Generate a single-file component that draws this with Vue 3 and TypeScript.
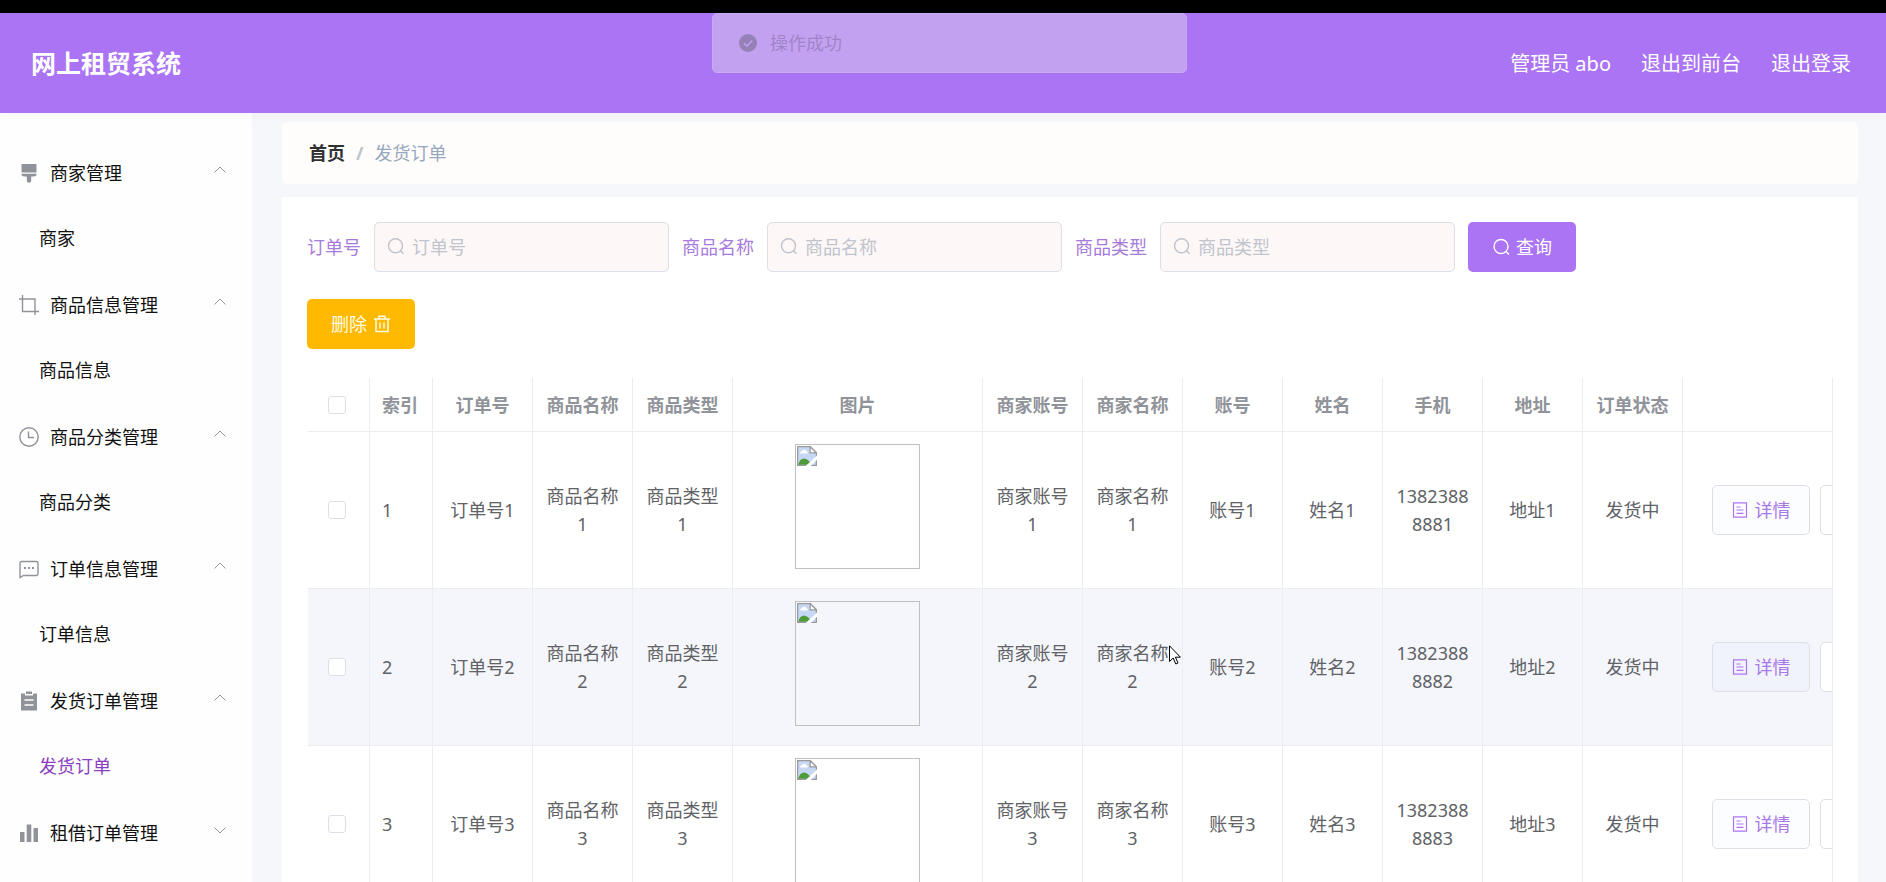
<script setup lang="ts">
interface Group {
  title: string
  icon: string
  child?: string
}

const groups: Group[] = [
  { title: '商家管理', icon: 'brush', child: '商家' },
  { title: '商品信息管理', icon: 'crop', child: '商品信息' },
  { title: '商品分类管理', icon: 'clock', child: '商品分类' },
  { title: '订单信息管理', icon: 'chat', child: '订单信息' },
  { title: '发货订单管理', icon: 'clipboard', child: '发货订单' },
  { title: '租借订单管理', icon: 'bars' },
]
const active = '发货订单'

const filters: string[] = ['订单号', '商品名称', '商品类型']

const columns: { label: string; cls: string }[] = [
  { label: '索引', cls: 'c-index' },
  { label: '订单号', cls: 'c-std' },
  { label: '商品名称', cls: 'c-std' },
  { label: '商品类型', cls: 'c-std' },
  { label: '图片', cls: 'c-pic' },
  { label: '商家账号', cls: 'c-std' },
  { label: '商家名称', cls: 'c-std' },
  { label: '账号', cls: 'c-std' },
  { label: '姓名', cls: 'c-std' },
  { label: '手机', cls: 'c-std' },
  { label: '地址', cls: 'c-std' },
  { label: '订单状态', cls: 'c-std' },
]

const rows = [1, 2, 3].map((n) => ({
  id: n,
  before: [`订单号${n}`, `商品名称${n}`, `商品类型${n}`],
  after: [`商家账号${n}`, `商家名称${n}`, `账号${n}`, `姓名${n}`, `1382388888${n}`, `地址${n}`, '发货中'],
}))
const hovered = 2
</script>

<template>
  <div class="page">
    <div class="strip"></div>
    <header class="header">
      <h1 class="brand">网上租贸系统</h1>
      <nav class="links">
        <span>管理员 abo</span>
        <a href="#front">退出到前台</a>
        <a href="#logout">退出登录</a>
      </nav>
      <div class="toast" role="status">
        <svg class="toast-icon" viewBox="0 0 18 18">
          <circle cx="9" cy="9" r="9" fill="#9580b8" />
          <path d="M5 9.200l2.900 2.900 5.300-5.600" fill="none" stroke="#c3a1f1" stroke-width="1.500" />
        </svg>
        <span>操作成功</span>
      </div>
    </header>

    <div class="body">
      <aside class="side">
        <section v-for="g in groups" :key="g.title">
          <button class="group" type="button">
            <svg class="g-icon" viewBox="0 0 20 20" fill="none" stroke="#909399" stroke-width="1.400">
              <g v-if="g.icon === 'brush'" fill="#909399" stroke="none">
                <path d="M2.500 1h15v8.500h-15zM2.500 10.800h15a2.600 2.600 0 0 1-2.600 2.600H12.200v4.200a2.200 2.200 0 0 1-4.400 0v-4.200H5.100a2.600 2.600 0 0 1-2.600-2.600z" />
              </g>
              <path v-else-if="g.icon === 'crop'" d="M0 4h16v16M3.500 0v16.500h16.500" />
              <g v-else-if="g.icon === 'clock'">
                <circle cx="10" cy="10" r="9.200" />
                <path d="M9.500 4.500v6h5.500" />
              </g>
              <g v-else-if="g.icon === 'chat'">
                <path d="M1 18.500V4.200A1.700 1.700 0 0 1 2.700 2.500h14.600A1.700 1.700 0 0 1 19 4.200v10.600a1.700 1.700 0 0 1-1.700 1.700H4.500z" />
                <path d="M5 9h2M9 9h2M13 9h2" stroke-width="2" />
              </g>
              <g v-else-if="g.icon === 'clipboard'">
                <path d="M2 2.500h4V4.500h8V2.500h4V19.500H2zM7 0.500h6v2.500H7z" fill="#909399" stroke="none" />
                <path d="M5.500 9h9M5.500 14h9" stroke="#fff" stroke-width="1.500" />
              </g>
              <path v-else d="M1 9h4.500v10H1zM7.700 1.500h4.600V19H7.700zM14.500 5H19v14h-4.500z" fill="#909399" stroke="none" />
            </svg>
            <span>{{ g.title }}</span>
            <svg class="arrow" viewBox="0 0 12 12" fill="none" stroke="#909399">
              <path :d="g.child ? 'M0.500 8.500L6 3l5.500 5.500' : 'M0.500 3.500L6 9l5.500-5.500'" />
            </svg>
          </button>
          <a v-if="g.child" href="#list" class="child" :class="{ on: g.child === active }">{{ g.child }}</a>
        </section>
      </aside>

      <main class="main">
        <nav class="crumbs">
          <a href="#home">首页</a><span class="slash">/</span><span>发货订单</span>
        </nav>

        <div class="card">
          <form class="filters" @submit.prevent>
            <template v-for="(f, i) in filters" :key="f">
              <label :for="`f${i}`">{{ f }}</label>
              <div class="field">
                <svg viewBox="0 0 18 18" fill="none" stroke="#c0c4cc" stroke-width="1.400">
                  <circle cx="8.500" cy="7.700" r="7" />
                  <path d="M13.300 12.500L16.500 15.800" />
                </svg>
                <input :id="`f${i}`" type="text" :placeholder="f" />
              </div>
            </template>
            <button class="btn query" type="submit">
              <svg viewBox="0 0 18 18" fill="none" stroke="#fff" stroke-width="1.400">
                <circle cx="9" cy="8.500" r="7" />
                <path d="M13.800 13.300L17 16.600" />
              </svg>
              <span>查询</span>
            </button>
          </form>

          <button class="btn remove" type="button">
            <span>删除</span>
            <svg viewBox="0 0 18 18" fill="none" stroke="#fffbe6" stroke-width="1.500">
              <path d="M1 4h16M3 4v12.500h12V4M6 3.500V1.300h6v2.200M7 7.500v6M11 7.500v6" />
            </svg>
          </button>

          <div class="scroller">
            <table class="grid">
              <thead>
                <tr>
                  <th class="c-check"><input type="checkbox" aria-label="全选" /></th>
                  <th v-for="c in columns" :key="c.label" :class="c.cls">{{ c.label }}</th>
                  <th class="c-ops"></th>
                </tr>
              </thead>
              <tbody>
                <tr v-for="r in rows" :key="r.id" :class="{ hover: r.id === hovered }">
                  <td class="c-check"><input type="checkbox" :aria-label="`选择 ${r.id}`" /></td>
                  <td class="c-index">{{ r.id }}</td>
                  <td v-for="t in r.before" :key="t">{{ t }}</td>
                  <td>
                    <div class="pic">
                      <svg viewBox="0 0 16 16">
                        <path d="M1 0.500h9.500L15.500 5.500V15.500H0.500V0.500z" fill="#c6d8f5" stroke="#9a9a9a" />
                        <path d="M10.500 0.500v5h5z" fill="#fff" stroke="#9a9a9a" />
                        <path d="M2.500 6a1.600 1.600 0 0 1 1.500-1.800 2 2 0 0 1 3.600 0A1.300 1.300 0 0 1 8.500 6z" fill="#fff" />
                        <path d="M1 15c1.500-6.500 7-7 10.500 0z" fill="#4f9a3b" />
                        <path d="M7 16L16 7.500V11L11 16z" fill="#fff" />
                      </svg>
                    </div>
                  </td>
                  <td v-for="t in r.after" :key="t">{{ t }}</td>
                  <td class="c-ops">
                    <div class="ops">
                      <button class="op" type="button">
                        <svg viewBox="0 0 16 16" fill="none" stroke="#ab74f5" stroke-width="1.200">
                          <path d="M1.500 0.800h13v14.400h-13zM4.500 5h4M4.500 8h7M4.500 11.300h7" />
                        </svg>
                        <span>详情</span>
                      </button>
                      <button class="op plain" type="button" aria-label="删除"></button>
                    </div>
                  </td>
                </tr>
              </tbody>
            </table>
          </div>
        </div>
      </main>
    </div>

    <svg class="pointer" viewBox="0 0 12 20">
      <path d="M0.500 0.800V16.500L4.200 13l2.600 6 2.200-1-2.600-5.800h5z" fill="#fff" stroke="#000" />
    </svg>
  </div>
</template>

<style>
body {
  margin: 0;
  background: #f5f7fa;
}
</style>

<style scoped>
.page {
  position: relative;
  height: 100vh;
  overflow: hidden;
  display: flex;
  flex-direction: column;
  font: 18px/28px "Noto Sans", "Noto Sans CJK SC", sans-serif;
  color: #606266;
}
.page * {
  box-sizing: border-box;
}
button,
input {
  font: inherit;
}
a {
  color: inherit;
  text-decoration: none;
}
.strip {
  flex: none;
  height: 13px;
  background: #000;
}
.header {
  position: relative;
  z-index: 1;
  flex: none;
  height: 100px;
  padding: 0 35px 0 31px;
  display: flex;
  align-items: center;
  justify-content: space-between;
  background: #aa74f5;
  color: #fff;
  box-shadow: 0 2px 12px rgba(0, 0, 0, 0.03);
}
.brand {
  margin: 0;
  font-size: 25px;
  font-weight: 700;
}
.links {
  display: flex;
  gap: 30px;
  padding-top: 2px;
  font-size: 20px;
}
.toast {
  position: absolute;
  top: 0;
  left: 50%;
  margin-left: -231px;
  width: 475px;
  height: 60px;
  padding: 0 26px;
  display: flex;
  align-items: center;
  gap: 13px;
  border: 1px solid #c9aaf3;
  border-radius: 5px;
  background: #c3a1f1;
  color: #a084ca;
}
.toast-icon {
  width: 18px;
  height: 18px;
}
.body {
  flex: 1;
  min-height: 0;
  display: flex;
}
.side {
  flex: none;
  width: 252px;
  padding-top: 25px;
  overflow: hidden;
  background: #fefefe;
  color: #111;
}
.group {
  width: 100%;
  height: 70px;
  padding: 0 26px 0 19px;
  display: flex;
  align-items: center;
  border: 0;
  background: none;
  color: #111;
}
.g-icon {
  width: 20px;
  height: 20px;
  margin-right: 11px;
}
.arrow {
  width: 12px;
  height: 12px;
  margin: 0 0 6px auto;
}
.child {
  display: flex;
  align-items: center;
  height: 60px;
  margin-bottom: 2px;
  padding-left: 39px;
}
.child.on {
  color: #8a3fc0;
}
.main {
  flex: 1;
  min-width: 0;
  padding: 9px 28px 0 30px;
  display: flex;
  flex-direction: column;
}
.crumbs {
  flex: none;
  height: 62px;
  margin-bottom: 13px;
  padding-left: 27px;
  display: flex;
  align-items: center;
  border-radius: 5px;
  background: #fffdfb;
  color: #97a8be;
}
.crumbs a {
  color: #303133;
  font-weight: 700;
}
.slash {
  margin: 0 11px;
  color: #c0c4cc;
  font-weight: 700;
}
.card {
  flex: 1;
  min-height: 0;
  padding: 25px 25px 0;
  overflow: hidden;
  background: #fff;
}
.filters {
  display: flex;
  align-items: center;
  gap: 13px;
}
.filters label {
  flex: none;
  color: #a67bdc;
}
.field {
  width: 295px;
  height: 50px;
  padding: 0 12px;
  display: flex;
  align-items: center;
  gap: 7px;
  border: 1px solid #dcdfe6;
  border-radius: 5px;
  background: #fdf7f7;
}
.field svg,
.btn svg {
  flex: none;
  width: 18px;
  height: 18px;
}
.field input {
  flex: 1;
  min-width: 0;
  padding: 0;
  border: 0;
  outline: 0;
  background: none;
  color: #606266;
}
.field input::placeholder {
  color: #c0c4cc;
  opacity: 1;
}
.btn {
  height: 50px;
  padding: 0 24px;
  display: flex;
  align-items: center;
  gap: 6px;
  border: 0;
  border-radius: 5px;
  color: #fff;
}
.query {
  background: #aa74f5;
}
.remove {
  margin-top: 27px;
  background: #ffba00;
  color: #fffbe6;
}
.scroller {
  margin-top: 29px;
  padding-left: 1px;
  overflow: hidden;
  border-right: 1px solid #ebedf0;
}
.grid {
  width: 1775px;
  table-layout: fixed;
  border-collapse: separate;
  border-spacing: 0;
}
th,
td {
  padding: 12px;
  border-right: 1px solid #ebedf0;
  border-bottom: 1px solid #ebedf0;
  text-align: center;
  vertical-align: middle;
  overflow-wrap: anywhere;
}
th {
  height: 54px;
  color: #909399;
  font-weight: 700;
}
.hover td {
  background: #f5f6fb;
}
th.c-check {
  width: 62px;
}
.c-check,
.c-index {
  text-align: left;
}
.c-check {
  padding-left: 20px;
}
th.c-index {
  width: 63px;
}
th.c-std {
  width: 100px;
}
th.c-pic {
  width: 250px;
}
.c-check input {
  appearance: none;
  display: block;
  width: 18px;
  height: 18px;
  margin: 0;
  border: 1px solid #dcdfe6;
  border-radius: 3px;
  background: #fff;
}
.pic {
  width: 125px;
  height: 125px;
  margin: 0 auto 7px;
  padding: 1px;
  border: 1px solid #c0c0c0;
}
.pic svg {
  display: block;
  width: 20px;
  height: 20px;
}
td.c-ops {
  padding-left: 29px;
}
.ops {
  display: flex;
  gap: 10px;
}
.op {
  width: 98px;
  height: 50px;
  padding: 0;
  display: flex;
  align-items: center;
  justify-content: center;
  gap: 7px;
  border: 1px solid #dcdfe6;
  border-radius: 5px;
  background: #fbfdff;
  color: #a878e8;
}
.hover .op {
  background: #f0f3fc;
}
.op.plain,
.hover .op.plain {
  background: #fff;
}
.op svg {
  width: 16px;
  height: 16px;
}
.pointer {
  position: absolute;
  top: 645px;
  left: 1169px;
  width: 12px;
  height: 20px;
}
</style>
